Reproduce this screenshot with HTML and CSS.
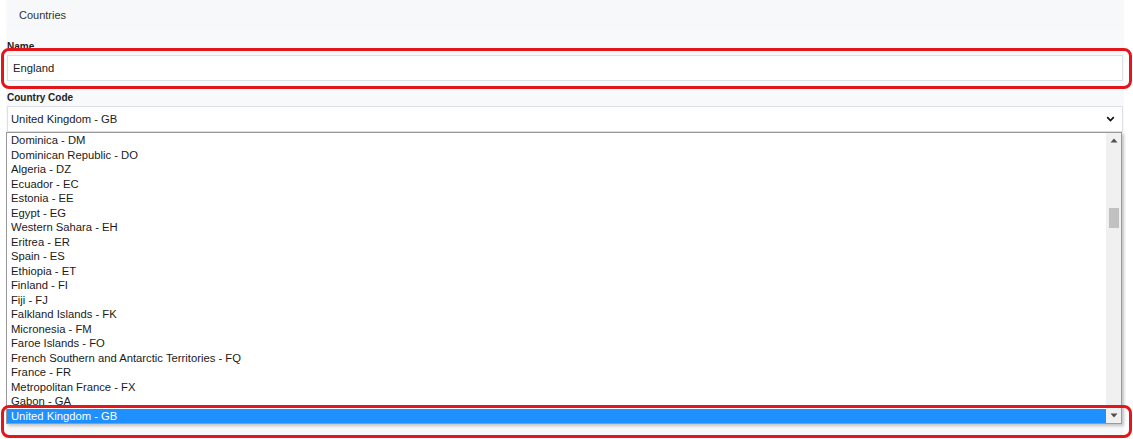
FILE: index.html
```html
<!DOCTYPE html>
<html lang="en">
<head>
<meta charset="utf-8">
<title>Countries</title>
<link rel="stylesheet" href="styles.css">
</head>
<body>
<div class="wrap">
  <div class="header">Countries</div>
  <div class="form">
    <label class="lbl lbl-name">Name</label>
    <div class="input">England</div>
    <label class="lbl lbl-code">Country Code</label>
    <div class="select">
      <span>United Kingdom - GB</span>
      <svg class="chev" width="9" height="6" viewBox="0 0 9 6"><path d="M1.2 1.2 L4.5 4.5 L7.8 1.2" fill="none" stroke="#111" stroke-width="1.7"/></svg>
    </div>
    <div class="listbox">
      <ul class="items">
        <li>Dominica - DM</li>
        <li>Dominican Republic - DO</li>
        <li>Algeria - DZ</li>
        <li>Ecuador - EC</li>
        <li>Estonia - EE</li>
        <li>Egypt - EG</li>
        <li>Western Sahara - EH</li>
        <li>Eritrea - ER</li>
        <li>Spain - ES</li>
        <li>Ethiopia - ET</li>
        <li>Finland - FI</li>
        <li>Fiji - FJ</li>
        <li>Falkland Islands - FK</li>
        <li>Micronesia - FM</li>
        <li>Faroe Islands - FO</li>
        <li>French Southern and Antarctic Territories - FQ</li>
        <li>France - FR</li>
        <li>Metropolitan France - FX</li>
        <li>Gabon - GA</li>
        <li class="sel">United Kingdom - GB</li>
      </ul>
      <div class="scrollbar">
        <div class="arrow"><svg width="8" height="5" viewBox="0 0 8 5"><path d="M0.5 4.5 L4 0.5 L7.5 4.5 Z" fill="#505050"/></svg></div>
        <div class="track"><div class="thumb"></div></div>
        <div class="arrow"><svg width="8" height="5" viewBox="0 0 8 5"><path d="M0.5 0.5 L4 4.5 L7.5 0.5 Z" fill="#505050"/></svg></div>
      </div>
    </div>
  </div>
</div>
<div class="annot annot-name"></div>
<div class="annot annot-sel"></div>
</body>
</html>
```

FILE: styles.css
```css
html, body {
  margin: 0;
  padding: 0;
  background: #ffffff;
}
body {
  font-family: "Liberation Sans", Arial, sans-serif;
  color: #222;
  width: 1133px;
  height: 439px;
  overflow: hidden;
  position: relative;
}
.wrap {
  margin: 0 9px 0 6px;
  background: #f8f9fa;
  padding: 0 1px;
  height: 439px;
}
.header {
  height: 30px;
  line-height: 30px;
  padding-left: 12px;
  font-size: 11px;
  color: #333;
  background: #f7f8fa;
}
.form {
  display: flex;
  flex-direction: column;
}
.lbl {
  display: block;
  font-size: 10px;
  font-weight: bold;
  line-height: 12px;
  color: #222;
}
.lbl-name {
  margin-top: 11px;
}
.lbl-code {
  margin-top: 11px;
}
.input {
  margin-top: 2px;
  height: 26px;
  box-sizing: border-box;
  border: 1px solid #dcdfe3;
  background: #fff;
  font-size: 11.25px;
  line-height: 24px;
  padding-left: 5px;
  color: #222;
}
.select {
  margin-top: 2px;
  height: 26px;
  box-sizing: border-box;
  border: 1px solid #dcdfe3;
  background: #fff;
  font-size: 11.25px;
  padding: 0 6px 0 3px;
  display: flex;
  align-items: center;
  justify-content: space-between;
  color: #222;
}
.chev {
  display: block;
  margin-right: 1px;
}
.listbox {
  margin-left: -1px;
  width: 1116px;
  box-sizing: border-box;
  border: 1px solid #9a9a9a;
  background: #fff;
  display: flex;
  box-shadow: 2px 2px 3px rgba(0, 0, 0, 0.22);
}
.items {
  list-style: none;
  margin: 0;
  padding: 0;
  flex: 1;
}
.items li {
  font-size: 11.25px;
  line-height: 14.5px;
  height: 14.5px;
  padding-left: 4px;
  color: #1a1a1a;
  white-space: nowrap;
}
.items li.sel {
  background: #1e90ff;
  color: #fff;
}
.scrollbar {
  width: 15px;
  background: #f0f0f0;
  display: flex;
  flex-direction: column;
}
.arrow {
  height: 15px;
  display: flex;
  align-items: center;
  justify-content: center;
}
.track {
  flex: 1;
}
.thumb {
  margin: 60px 2px 0 3px;
  height: 20px;
  background: #c1c1c1;
}
.annot {
  position: absolute;
  box-sizing: border-box;
  border: 3px solid #e3161c;
  border-radius: 8px;
  left: 1px;
  width: 1131px;
}
.annot-name {
  top: 48px;
  height: 41px;
}
.annot-sel {
  top: 405px;
  height: 33px;
}
```
